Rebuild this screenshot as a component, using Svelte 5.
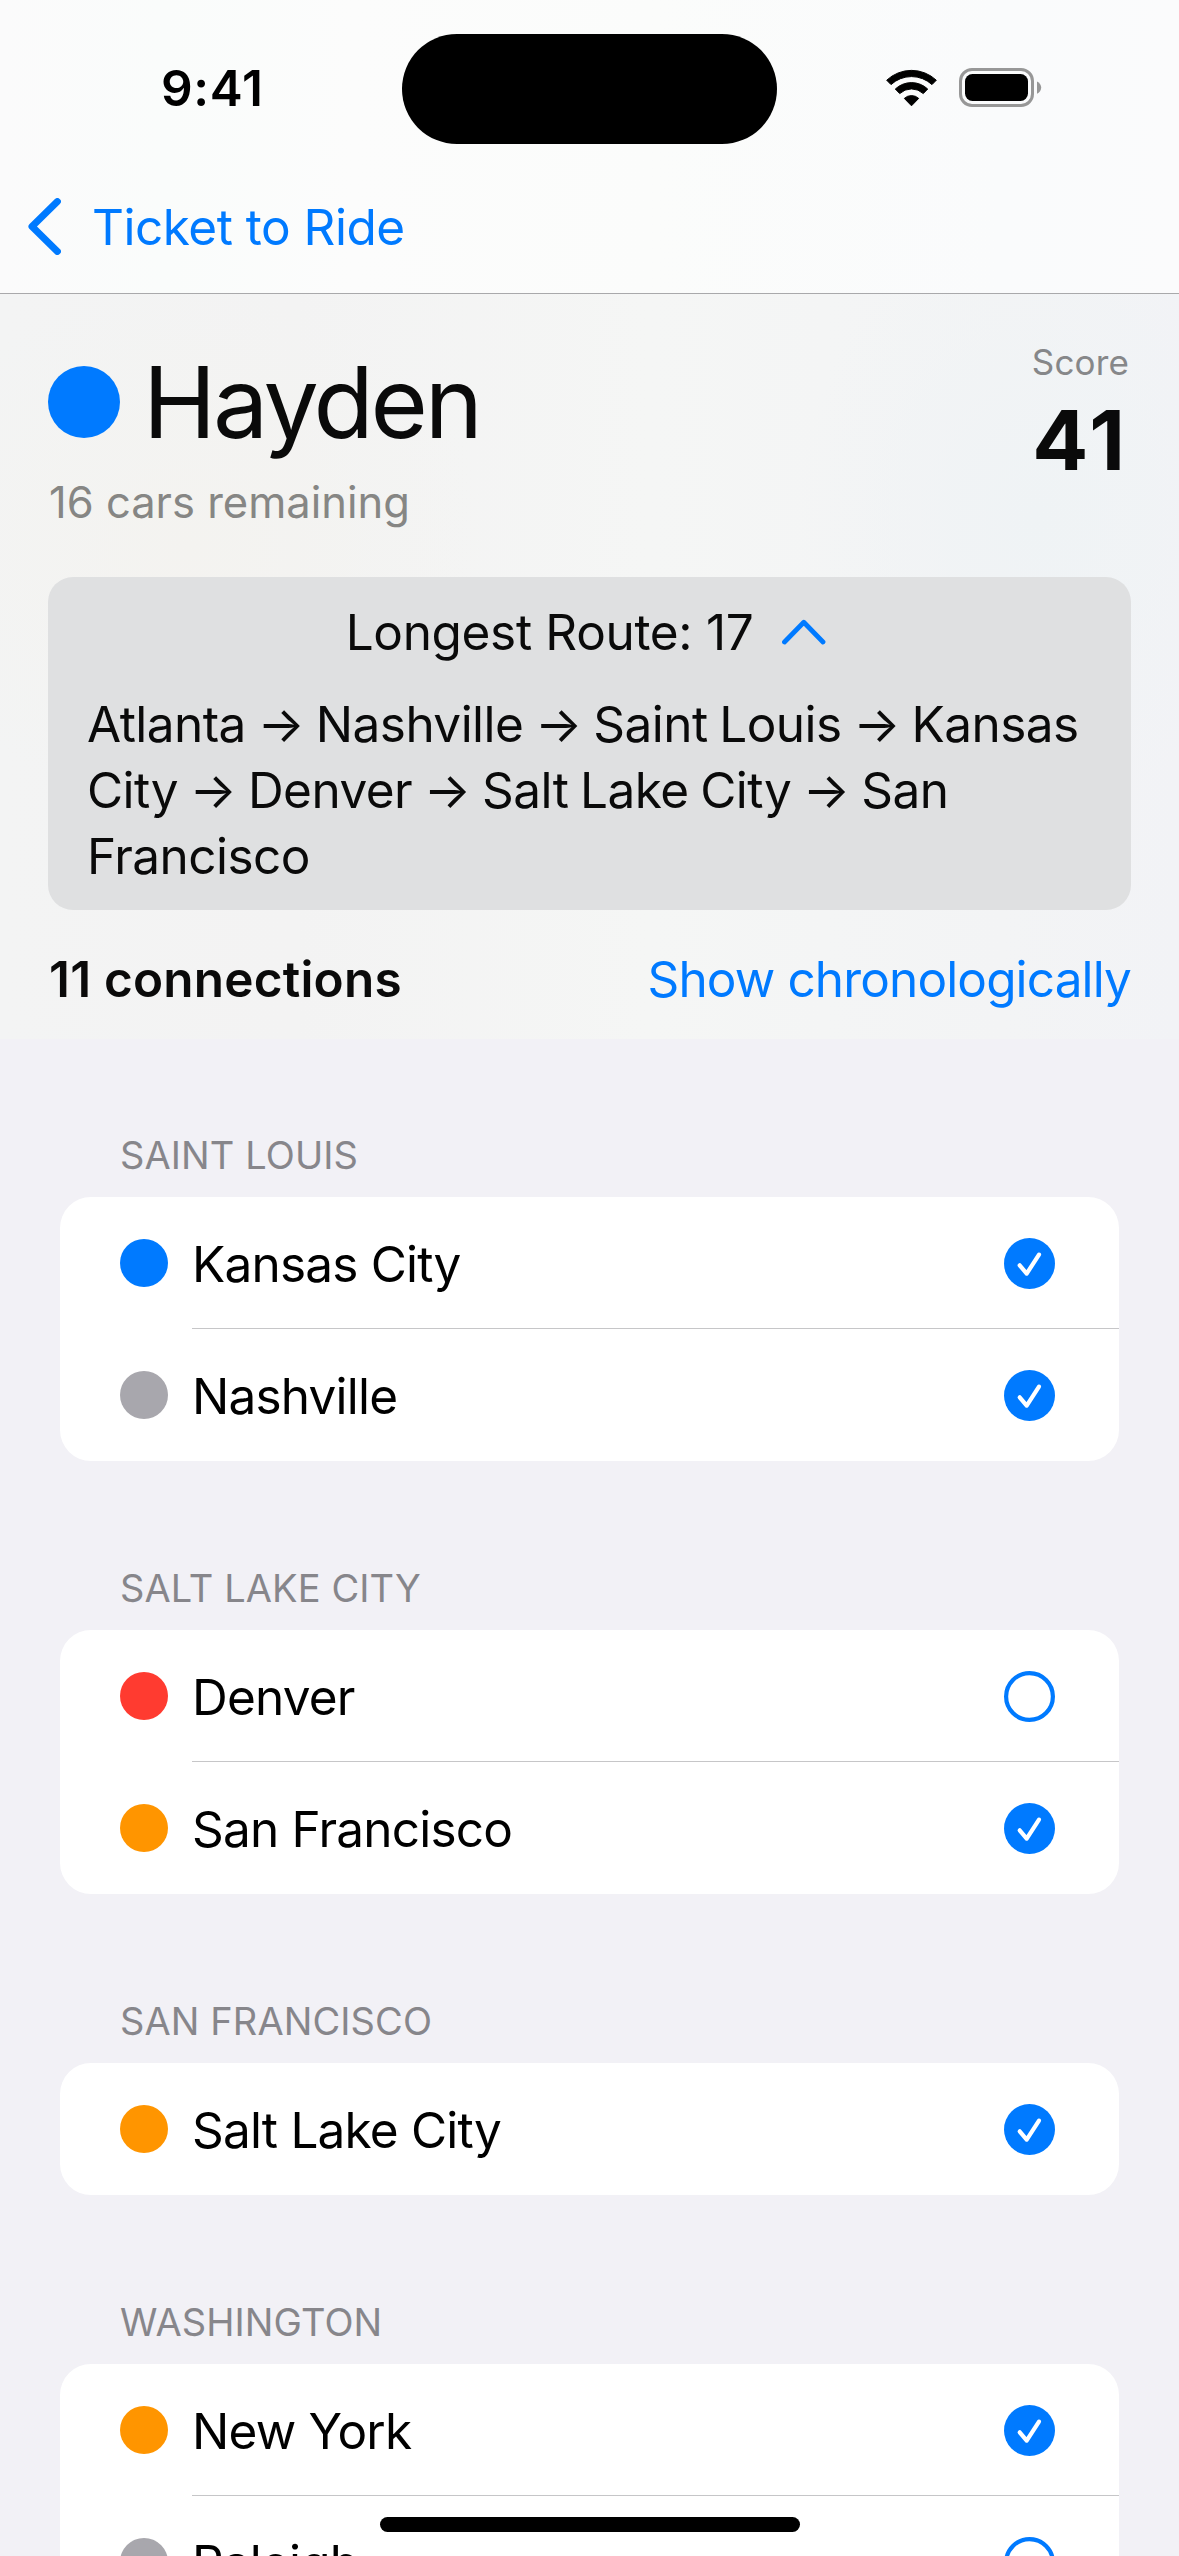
<script lang="ts">
    const colors = {
        blue: '#007aff',
        gray: '#a8a7ad',
        red: '#ff3b30',
        orange: '#ff9500'
    };

    const route = ['Atlanta', 'Nashville', 'Saint Louis', 'Kansas City', 'Denver', 'Salt Lake City', 'San Francisco'];

    let sections = $state([
        {
            city: 'Saint Louis',
            connections: [
                { to: 'Kansas City', color: 'blue', done: true },
                { to: 'Nashville', color: 'gray', done: true }
            ]
        },
        {
            city: 'Salt Lake City',
            connections: [
                { to: 'Denver', color: 'red', done: false },
                { to: 'San Francisco', color: 'orange', done: true }
            ]
        },
        {
            city: 'San Francisco',
            connections: [
                { to: 'Salt Lake City', color: 'orange', done: true }
            ]
        },
        {
            city: 'Washington',
            connections: [
                { to: 'New York', color: 'orange', done: true },
                { to: 'Raleigh', color: 'gray', done: false }
            ]
        }
    ]);

    let showRoute = $state(true);
</script>

<div class="screen">
    <div class="topBar">
        <div class="statusBar">
            <span class="time">9:41</span>
            <div class="island"></div>
            <div class="statusIcons">
                <svg width="51" height="38" viewBox="0 0 51 38">
                    <g stroke="#000" stroke-width="1" stroke-linejoin="round">
                        <path d="M.7 11.2A36.2 36.2 0 0 1 50.3 11.2L46 15.6A30.2 30.2 0 0 0 5 15.6Z" />
                        <path d="M9.3 20A23.7 23.7 0 0 1 41.7 20L37.3 24.6A17.2 17.2 0 0 0 13.7 24.6Z" />
                        <path d="M18.3 29.4A10.6 10.6 0 0 1 32.7 29.4L25.5 36.8Z" />
                    </g>
                </svg>
                <svg width="83" height="39" viewBox="0 0 83 39">
                    <rect x="1.5" y="1.5" width="72" height="36" rx="11.5" fill="none" stroke="#979797" stroke-width="3" />
                    <rect x="6" y="6" width="63" height="27" rx="7.5" />
                    <path d="M78 13.4c2.5 1 4.2 3.4 4.2 6.200s-1.700 5.200-4.200 6.200z" fill="#979797" />
                </svg>
            </div>
        </div>
        <div class="navBar">
            <svg width="33" height="57" viewBox="0 0 33 57">
                <path class="line" d="M29.4 3.6L4 28.5l25.4 24.9" stroke-width="7" />
            </svg>
            <span>Ticket to Ride</span>
        </div>
    </div>

    <header>
        <div class="player">
            <div>
                <div class="name">
                    <i class="dot big" style="background: {colors.blue}"></i>
                    <h1>Hayden</h1>
                </div>
                <p class="cars">16 cars remaining</p>
            </div>
            <div class="score">
                <p class="scoreLabel">Score</p>
                <p class="scoreValue">41</p>
            </div>
        </div>

        <div class="routeBox">
            <button class="routeTitle" onclick={() => (showRoute = !showRoute)}>
                <span>Longest Route: 17</span>
                <svg width="49" height="26" viewBox="0 0 49 26">
                    <path class="line" d="M2.5 23L21.8 3.3 41 23" stroke-width="4.8" />
                </svg>
            </button>
            {#if showRoute}
                <p class="route">{route.join(' → ')}</p>
            {/if}
        </div>

        <div class="summary">
            <strong>11 connections</strong>
            <span>Show chronologically</span>
        </div>
    </header>

    <main>
        {#each sections as section}
            <section>
                <h2>{section.city}</h2>
                <div class="card">
                    {#each section.connections as connection}
                        <div class="row">
                            <i class="dot" style="background: {colors[connection.color]}"></i>
                            <div class="rowBody">
                                <span>{connection.to}</span>
                                <svg width="51" height="51" viewBox="0 0 51 51">
                                    {#if connection.done}
                                        <circle cx="25.5" cy="25.5" r="25.5" fill="#007aff" />
                                        <path d="M15.700 27.300l7 8.300L35 16.600" fill="none" stroke="#fff" stroke-width="4.2" stroke-linecap="round" stroke-linejoin="round" />
                                    {:else}
                                        <circle cx="25.5" cy="25.5" r="23.4" fill="none" stroke="#007aff" stroke-width="4.2" />
                                    {/if}
                                </svg>
                            </div>
                        </div>
                    {/each}
                </div>
            </section>
        {/each}
    </main>

    <div class="homeIndicator"></div>
</div>

<style>
    :global(body) {
        background: #f2f1f6;
    }

    h1, h2, p {
        margin: 0;
        font-weight: 400;
    }

    .screen {
        position: relative;
        width: 1179px;
        height: 2556px;
        overflow: hidden;
        background: #f2f1f6;
        color: #000;
        font-family: Inter, "Liberation Sans", sans-serif;
        font-size: 49.5px;
        letter-spacing: -0.5px;
        white-space: nowrap;
    }

    .topBar {
        background: linear-gradient(90deg, #fbfbfb 0%, #fafcfb 14%, #fcfcfc 30%, #fbfcfb 55%, #fafbfc 85%, #fbfbfc 100%);
        border-bottom: 1px solid #a9a9ab;
    }

    .statusBar {
        display: grid;
        grid-template-columns: 402px 375px 1fr;
        align-items: center;
        height: 110px;
        padding: 34px 0 16px;
    }

    .time {
        padding: 0 0 3px 161px;
        font-weight: 600;
        letter-spacing: 0.7px;
    }

    .island {
        height: 110px;
        border-radius: 55px;
        background: #000;
    }

    .statusIcons {
        display: flex;
        align-items: center;
        gap: 22px;
        padding: 0 0 3px 109px;
    }

    .navBar {
        display: flex;
        align-items: center;
        gap: 31px;
        height: 133px;
        padding-left: 28px;
        color: #007aff;
    }

    .line {
        fill: none;
        stroke: #007aff;
        stroke-linecap: round;
        stroke-linejoin: round;
    }

    header {
        padding: 47px 48px 30px;
        color: #0a0a0a;
        background:
            radial-gradient(ellipse 240px 300px at 88% 30%, #eff3f5 0%, #eff3f500 100%),
            radial-gradient(ellipse 300px 260px at 16% 34%, #f4f3f0 0%, #f4f3f000 100%),
            linear-gradient(90deg, #f3f4f4 0%, #f3f3f3 25%, #f5f6f5 55%, #f3f4f5 85%, #f2f3f6 100%);
    }

    .player {
        display: flex;
        justify-content: space-between;
    }

    .name {
        display: flex;
        align-items: center;
        gap: 23px;
        height: 122px;
    }

    h1 {
        font-size: 98.5px;
        letter-spacing: -3.3px;
    }

    .cars {
        margin-top: 12px;
        padding-left: 1px;
        font-size: 43.5px;
        line-height: 54px;
        letter-spacing: 0;
        color: #868684;
    }

    .score {
        padding-right: 2px;
        text-align: right;
    }

    .scoreLabel {
        font-size: 35px;
        line-height: 43px;
        letter-spacing: 0.15px;
        color: #868789;
    }

    .scoreValue {
        margin-top: 6px;
        font-size: 83px;
        font-weight: 700;
        line-height: 100px;
        letter-spacing: 4px;
    }

    .routeBox {
        margin-top: 48px;
        padding: 22px 41px 21px 39px;
        border-radius: 25px;
        background: #dfe0e1;
    }

    .routeTitle {
        display: flex;
        align-items: center;
        justify-content: center;
        gap: 29px;
        width: 100%;
        padding: 0;
        border: 0;
        background: none;
        color: inherit;
        font: inherit;
        line-height: 66px;
        letter-spacing: -0.33px;
    }

    .route {
        margin-top: 26px;
        line-height: 66px;
        letter-spacing: -0.55px;
        word-spacing: -1.7px;
        white-space: normal;
    }

    .summary {
        display: flex;
        justify-content: space-between;
        margin-top: 39px;
        line-height: 60px;
    }

    .summary strong {
        padding-left: 1px;
        font-weight: 600;
        letter-spacing: 0.2px;
    }

    .summary span {
        color: #007aff;
        letter-spacing: -0.87px;
    }

    main {
        padding: 93px 60px 0;
    }

    section {
        margin-bottom: 104px;
    }

    h2 {
        margin-bottom: 19px;
        padding-left: 60px;
        font-size: 38px;
        line-height: 46px;
        letter-spacing: 0.1px;
        color: #87868b;
        text-transform: uppercase;
    }

    .card {
        border-radius: 31px;
        background: #fff;
        overflow: hidden;
    }

    .row {
        display: flex;
        align-items: center;
        gap: 24px;
        height: 132px;
        padding-left: 60px;
    }

    .dot {
        flex: none;
        width: 48px;
        height: 48px;
        border-radius: 50%;
    }

    .dot.big {
        width: 72px;
        height: 72px;
    }

    .rowBody {
        display: flex;
        flex: 1;
        align-items: center;
        justify-content: space-between;
        box-sizing: border-box;
        height: 132px;
        padding-right: 64px;
        border-bottom: 1px solid #c6c6c8;
        letter-spacing: -0.8px;
    }

    .rowBody span {
        padding-top: 2px;
    }

    .rowBody svg {
        margin-top: -4px;
        margin-bottom: -5px;
    }

    .row:last-child .rowBody {
        border-bottom-color: transparent;
    }

    .homeIndicator {
        position: absolute;
        left: 380px;
        bottom: 24px;
        width: 420px;
        height: 15px;
        border-radius: 8px;
        background: #000;
    }
</style>
